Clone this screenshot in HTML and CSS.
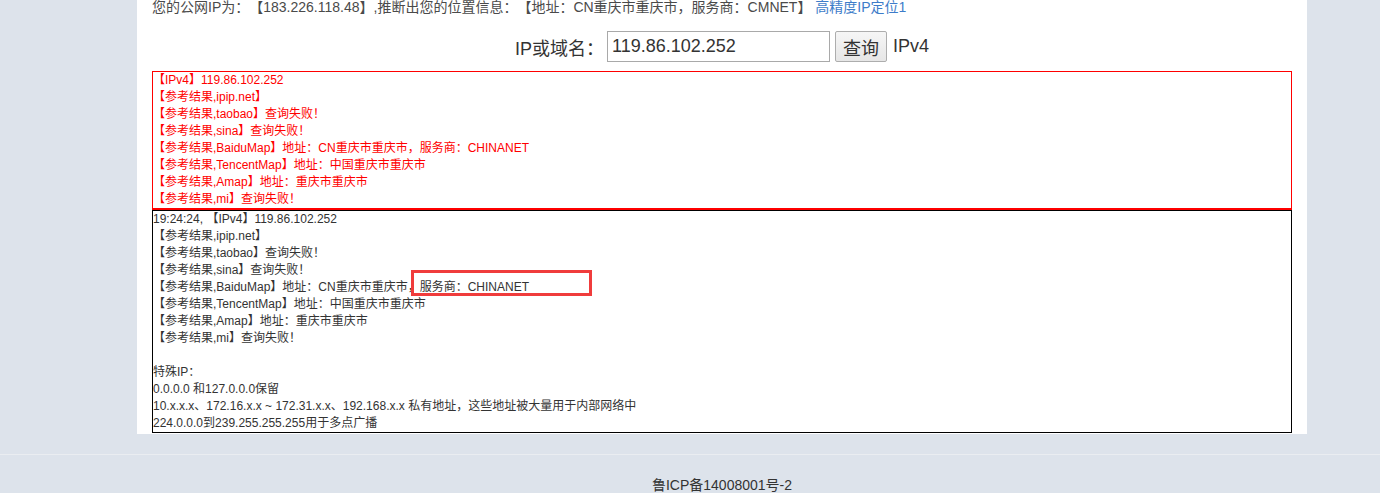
FILE: index.html
```html
<!DOCTYPE html>
<html lang="zh-CN">
<head>
<meta charset="utf-8">
<title>IP查询</title>
<link rel="stylesheet" href="styles.css">
</head>
<body>
<div class="container">
  <div class="myip">您的公网IP为：【183.226.118.48】,推断出您的位置信息：【地址：CN重庆市重庆市，服务商：CMNET】 <a class="link" href="#">高精度IP定位1</a></div>
  <form class="query">
    <label class="label">IP或域名：</label>
    <input class="ipinput" type="text" value="119.86.102.252">
    <button class="btn" type="button">查询</button>
    <span class="ver">IPv4</span>
  </form>
  <div class="result red">
    <div>【IPv4】119.86.102.252</div>
    <div>【参考结果,ipip.net】</div>
    <div>【参考结果,taobao】查询失败！</div>
    <div>【参考结果,sina】查询失败！</div>
    <div>【参考结果,BaiduMap】地址：CN重庆市重庆市，服务商：CHINANET</div>
    <div>【参考结果,TencentMap】地址：中国重庆市重庆市</div>
    <div>【参考结果,Amap】地址：重庆市重庆市</div>
    <div>【参考结果,mi】查询失败！</div>
  </div>
  <div class="result black">
    <div>19:24:24, 【IPv4】119.86.102.252</div>
    <div>【参考结果,ipip.net】</div>
    <div>【参考结果,taobao】查询失败！</div>
    <div>【参考结果,sina】查询失败！</div>
    <div>【参考结果,BaiduMap】地址：CN重庆市重庆市，服务商：CHINANET</div>
    <div>【参考结果,TencentMap】地址：中国重庆市重庆市</div>
    <div>【参考结果,Amap】地址：重庆市重庆市</div>
    <div>【参考结果,mi】查询失败！</div>
    <div class="blank"></div>
    <div>特殊IP：</div>
    <div>0.0.0.0 和127.0.0.0保留</div>
    <div>10.x.x.x、172.16.x.x ~ 172.31.x.x、192.168.x.x 私有地址，这些地址被大量用于内部网络中</div>
    <div>224.0.0.0到239.255.255.255用于多点广播</div>
    <div class="mark"></div>
  </div>
</div>
<div class="footer">
  <div class="footer-inner">鲁ICP备14008001号-2</div>
</div>
</body>
</html>
```
FILE: styles.css
```css
body {
  margin: 0;
  background: #dde3eb;
  font-family: "Liberation Sans", Arial, "Noto Sans CJK SC", sans-serif;
  color: #333;
  text-spacing-trim: space-all;
}
.container {
  width: 1140px;
  margin-left: 137px;
  padding: 0 15px 1px;
  background: #fff;
}
.myip {
  font-size: 14px;
  line-height: 14px;
  color: #4a4a4a;
  white-space: nowrap;
}
.link {
  color: #3d7cc9;
  text-decoration: none;
}
.query {
  display: flex;
  justify-content: center;
  align-items: center;
  margin: 17px 0 9px;
  height: 31px;
  font-size: 18px;
}
.label {
  color: #333;
  margin-right: 3px;
}
.ipinput {
  box-sizing: border-box;
  width: 223px;
  height: 31px;
  border: 1px solid #a9a9a9;
  padding: 0 4px;
  font-family: inherit;
  font-size: 18px;
  color: #333;
}
.btn {
  box-sizing: border-box;
  width: 52px;
  height: 31px;
  margin-left: 5px;
  border: 1px solid #adadad;
  border-radius: 2px;
  background: linear-gradient(#f6f6f6, #e6e6e6);
  font-family: inherit;
  font-size: 18px;
  color: #333;
  padding: 0;
}
.ver {
  margin-left: 6px;
  color: #333;
}
.result {
  font-size: 12px;
  line-height: 17px;
  white-space: nowrap;
}
.red {
  border: 1px solid #f00;
  border-bottom-width: 2px;
  color: #f00;
}
.black {
  position: relative;
  border: 1px solid #000;
  color: #333;
}
.blank {
  height: 17px;
}
.mark {
  position: absolute;
  left: 258px;
  top: 59px;
  width: 175px;
  height: 20px;
  border: 3px solid #f03c3c;
}
.footer {
  margin-top: 20px;
  border-top: 1px solid #eaedf1;
  padding-top: 20px;
}
.footer-inner {
  width: 1170px;
  margin-left: 137px;
  text-align: center;
  font-size: 14px;
  line-height: 20px;
  color: #333;
}
```
